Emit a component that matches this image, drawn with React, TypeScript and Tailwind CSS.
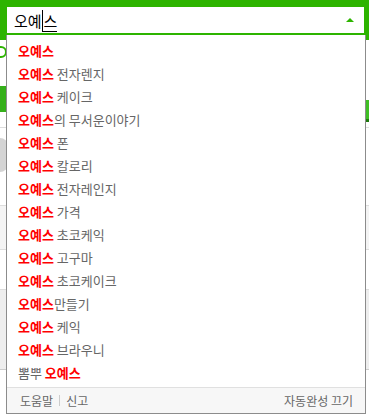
const items: [string, string, string][] = [
  ["", "오예스", ""],
  ["", "오예스", " 전자렌지"],
  ["", "오예스", " 케이크"],
  ["", "오예스", "의 무서운이야기"],
  ["", "오예스", " 폰"],
  ["", "오예스", " 칼로리"],
  ["", "오예스", " 전자레인지"],
  ["", "오예스", " 가격"],
  ["", "오예스", " 초코케익"],
  ["", "오예스", " 고구마"],
  ["", "오예스", " 초코케이크"],
  ["", "오예스", "만들기"],
  ["", "오예스", " 케익"],
  ["", "오예스", " 브라우니"],
  ["뽐뿌 ", "오예스", ""],
];

export default function App() {
  return (
    <div className="relative w-[369px] h-[417px] overflow-hidden bg-white font-['Noto_Sans_CJK_KR','Noto_Sans',sans-serif]">
      {/* search bar */}
      <div className="h-[40px] bg-[#2db400] pt-[7px] pl-[7px] pr-[5px]">
        <div className="h-[26px] bg-white flex items-center pl-[7px] pr-[10px]">
          <span className="text-[15px] leading-none text-black">
            오예<span className="border-l border-black border-b pl-[1px]">스</span>
          </span>
          <div className="ml-auto w-0 h-0 border-l-[4px] border-r-[4px] border-b-[4px] border-l-transparent border-r-transparent border-b-[#2db400]" />
        </div>
      </div>

      {/* page behind */}
      <div className="flex flex-col">
        <div className="h-[6px]" />
        <div className="h-[12px] w-[12px] rounded-full border-2 border-[#2db400] -ml-[5px]" />
        <div className="h-[28px]" />
        <div className="flex justify-between">
          <div className="h-[26px] w-[8px] bg-[#35b01a]" />
          <div className="h-[22px] w-[4px] bg-[#3fbf24] mt-[14px] border-b-[3px] border-[#1f7a0e]" />
        </div>
        <div className="h-[6px] border-b border-[#ddd]" />
        <div className="h-[10px]" />
        <div className="h-[34px] w-[16px] rounded-full bg-[#d4d4d4] -ml-[8px]" />
        <div className="h-[34px] border-b border-[#ddd]" />
        <div className="h-[44px] bg-[#f4f4f4] border-b border-[#ddd]" />
        <div className="h-[40px] border-b border-[#ddd]" />
        <div className="h-[80px] bg-[#eeeeee] border-b border-[#ccc]" />
      </div>

      {/* suggestions dropdown */}
      <div className="absolute left-[6px] top-[35px] w-[360px] bg-white border-l border-r border-b border-[#8c8c8c] text-[13px]">
        <ul className="pt-[4px] pb-[3px]">
          {items.map(([pre, hit, post], i) => (
            <li key={i} className="h-[23px] flex items-center pl-[11px] text-[#666] whitespace-pre">
              {pre}
              <b className="text-[#ff0000] font-bold">{hit}</b>
              {post}
            </li>
          ))}
        </ul>
        <div className="h-[26px] bg-[#f7f7f7] border-t border-[#e0e0e0] flex items-center pl-[13px] pr-[12px] text-[12px] text-[#666]">
          <span>도움말</span>
          <span className="mx-[6px] h-[11px] w-px bg-[#ccc]" />
          <span>신고</span>
          <span className="ml-auto">자동완성 끄기</span>
        </div>
      </div>
    </div>
  );
}
